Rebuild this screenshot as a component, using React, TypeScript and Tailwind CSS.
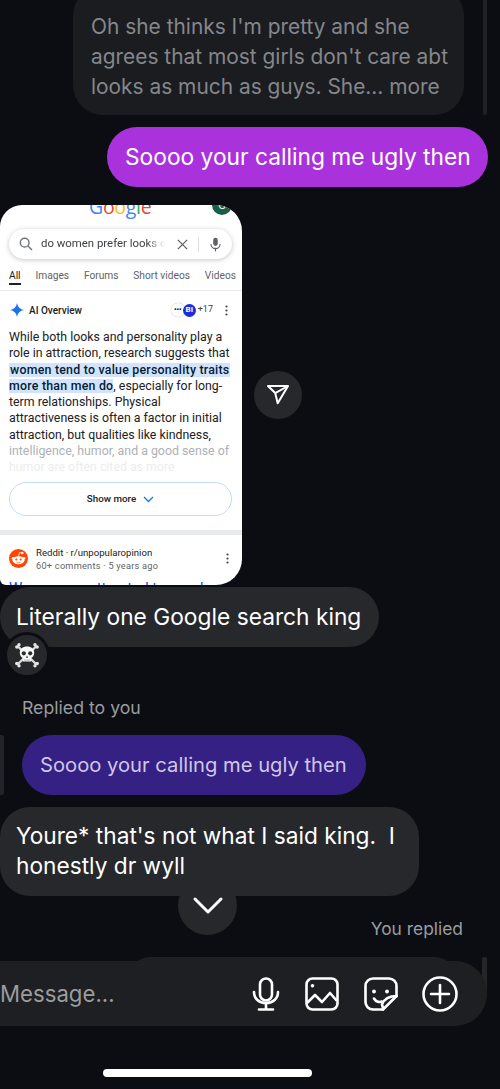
import React from "react";

const inter = "font-['Inter',sans-serif]";

function Skull() {
  return (
    <svg width="26" height="26" viewBox="0 0 26 26">
      <g stroke="#dcdcdc" strokeWidth="2.400" strokeLinecap="round">
        <path d="M4 4.500L22 22M22 4.500L4 22" />
      </g>
      <g fill="#e6e6e6">
        <circle cx="2.800" cy="5" r="1.700" />
        <circle cx="5" cy="2.800" r="1.700" />
        <circle cx="23.200" cy="5" r="1.700" />
        <circle cx="21" cy="2.800" r="1.700" />
        <circle cx="2.800" cy="21.500" r="1.700" />
        <circle cx="5" cy="23.700" r="1.700" />
        <circle cx="23.200" cy="21.500" r="1.700" />
        <circle cx="21" cy="23.700" r="1.700" />
      </g>
      <path d="M13 4.500c-4.400 0-7.200 2.700-7.200 6.200 0 2.600 1.300 4.400 3 5.300v3.500h8.400V16c1.700-.9 3-2.700 3-5.300 0-3.500-2.800-6.200-7.200-6.200z" fill="#f7f7f7" />
      <circle cx="9.800" cy="11.300" r="2.100" fill="#2e2e2e" />
      <circle cx="16.200" cy="11.300" r="2.100" fill="#2e2e2e" />
      <path d="M13 13.600l1.100 2.200h-2.200z" fill="#2e2e2e" />
      <path d="M11 17v2.500M13 17v2.500M15 17v2.500" stroke="#888" strokeWidth=".6" />
    </svg>
  );
}

function Card() {
  return (
    <div className="w-[242px] h-[380px] bg-white overflow-hidden rounded-tl-[22px] rounded-tr-[26px] rounded-br-[26px] rounded-bl-[6px] font-['Roboto',sans-serif] shrink-0 relative">
      <div className="h-[24px] relative overflow-hidden">
        <div className="absolute left-[89px] top-[-10px] text-[19.500px] leading-[24px] font-medium tracking-[-0.3px] font-['Open_Sans',sans-serif]">
          <span className="text-[#4285f4]">G</span>
          <span className="text-[#ea4335]">o</span>
          <span className="text-[#fbbc05]">o</span>
          <span className="text-[#4285f4]">g</span>
          <span className="text-[#34a853]">l</span>
          <span className="text-[#ea4335]">e</span>
        </div>
        <div className="absolute left-[212px] top-[-10px] w-[20px] h-[20px] rounded-full bg-[#1b5e46] flex items-center justify-center text-white text-[11px] leading-none">G</div>
      </div>
      <div className="ml-[9px] mr-[10px] h-[30px] rounded-full bg-white shadow-[0_1px_5px_rgba(60,64,67,0.3)] flex items-center pl-[9px]">
        <svg width="16" height="16" viewBox="0 0 24 24" fill="none" stroke="#70757a" strokeWidth="2.200"><circle cx="10" cy="10" r="6.500" /><path d="M15 15l6 6" /></svg>
        <span className="ml-[7px] text-[11.400px] text-[#3c4043] w-[124px] whitespace-nowrap overflow-hidden [mask-image:linear-gradient(to_right,black_85%,transparent)]">do women prefer looks or</span>
        <svg className="ml-[11px]" width="13" height="13" viewBox="0 0 14 14" stroke="#5f6368" strokeWidth="1.400"><path d="M2 2l10 10M12 2L2 12" /></svg>
        <div className="ml-[9px] w-px h-[15px] bg-[#dadce0]" />
        <svg className="ml-[11px]" width="11" height="15" viewBox="0 0 12 15" fill="#5f6368"><rect x="3.500" y="0" width="5" height="9" rx="2.500" /><path d="M1 7a5 5 0 0 0 10 0" fill="none" stroke="#5f6368" strokeWidth="1.200" /><rect x="5.400" y="11" width="1.200" height="4" /></svg>
      </div>
      <div className="h-[32px] pl-[9px] pr-[6px] flex justify-between text-[10.200px] text-[#5f6368] border-b border-[#e8eaed] pt-[9px] whitespace-nowrap relative">
        <span className="text-[#202124] relative h-[23px]">All<span className="absolute left-0 right-0 bottom-[6px] h-[2px] bg-[#202124]" /></span>
        <span>Images</span>
        <span>Forums</span>
        <span>Short videos</span>
        <span>Videos</span>
      </div>
      <div className="h-[38px] px-[10px] flex items-center">
        <svg width="14" height="14" viewBox="0 0 14 14" fill="#1a73e8"><path d="M7 0c.6 4 3 6.400 7 7-4 .6-6.400 3-7 7-.6-4-3-6.400-7-7 4-.6 6.400-3 7-7z" /></svg>
        <span className="ml-[5px] text-[10px] font-medium text-[#202124]">AI Overview</span>
        <div className="ml-auto flex items-center">
          <div className="w-[14px] h-[14px] rounded-full bg-white flex items-center justify-center text-[7px] font-bold text-black shadow-[0_0_1px_#999] leading-none">•••</div>
          <div className="-ml-[2px] w-[13px] h-[13px] rounded-full bg-[#1a2be0] text-white text-[8px] font-bold flex items-center justify-center">BI</div>
          <span className="ml-[2px] text-[9px] text-[#3c4043]">+17</span>
          <svg className="ml-[12px] mr-[4px]" width="3" height="11" viewBox="0 0 3 11" fill="#444"><circle cx="1.500" cy="1.500" r="1.100" /><circle cx="1.500" cy="5.500" r="1.100" /><circle cx="1.500" cy="9.500" r="1.100" /></svg>
        </div>
      </div>
      <div className="pl-[9px] text-[12.350px] leading-[16.250px] text-[#202124] whitespace-nowrap">
        <div>While both looks and personality play a</div>
        <div>role in attraction, research suggests that</div>
        <div><span className="bg-[#d3e3fd] text-[#001d35] font-medium tracking-[0.24px] pl-[1px] pr-[1px]">women tend to value personality traits</span></div>
        <div><span className="bg-[#d3e3fd] text-[#001d35] font-medium tracking-[0.24px]">more than men do</span>, especially for long-</div>
        <div>term relationships. Physical</div>
        <div>attractiveness is often a factor in initial</div>
        <div>attraction, but qualities like kindness,</div>
        <div className="text-[#aeb1b6]">intelligence, humor, and a good sense of</div>
        <div className="text-[#eceded]">humor are often cited as more</div>
      </div>
      <div className="ml-[9px] mr-[10px] mt-[7px] h-[34px] rounded-full border border-[#c6dafc] flex items-center justify-center text-[9.800px] font-medium text-[#202124]">
        <span>Show more</span>
        <svg className="ml-[7px]" width="11" height="7" viewBox="0 0 11 7" fill="none" stroke="#1a73e8" strokeWidth="1.300"><path d="M1 1l4.500 4.500L10 1" /></svg>
      </div>
      <div className="mt-[14px] h-[5px] bg-[#e8eaed]" />
      <div className="h-[44px] pt-[3px] pl-[9px] pr-[13px] flex items-center">
        <svg width="19" height="19" viewBox="0 0 20 20">
          <circle cx="10" cy="10" r="10" fill="#ff4500" />
          <ellipse cx="10" cy="11.800" rx="6.300" ry="4.300" fill="#fff" />
          <circle cx="4.300" cy="9.800" r="1.500" fill="#fff" />
          <circle cx="15.700" cy="9.800" r="1.500" fill="#fff" />
          <circle cx="14" cy="4.300" r="1.300" fill="#fff" />
          <path d="M10 7.500L11 3.800l3 .5" stroke="#fff" strokeWidth=".8" fill="none" />
          <circle cx="7.700" cy="11" r="1.100" fill="#ff4500" />
          <circle cx="12.300" cy="11" r="1.100" fill="#ff4500" />
          <path d="M7.800 13.800c1.300.9 3.100.9 4.400 0" stroke="#ff4500" strokeWidth=".7" fill="none" />
        </svg>
        <div className="ml-[8px] flex flex-col">
          <span className="text-[9.600px] leading-[13px] text-[#202124]">Reddit · r/unpopularopinion</span>
          <span className="text-[9.200px] leading-[13px] tracking-[0.25px] text-[#5f6368]">60+ comments · 5 years ago</span>
        </div>
        <svg className="ml-auto" width="3" height="11" viewBox="0 0 3 11" fill="#444"><circle cx="1.500" cy="1.500" r="1.100" /><circle cx="1.500" cy="5.500" r="1.100" /><circle cx="1.500" cy="9.500" r="1.100" /></svg>
      </div>
      <div className="pl-[9px] text-[15px] leading-[18px] text-[#1558d6] whitespace-nowrap">Women are attracted to good</div>
    </div>
  );
}

export default function App() {
  return (
    <div className={`w-[500px] h-[1089px] overflow-hidden bg-[#0b0d12] flex flex-col relative ${inter}`}>
      {/* Top faded message */}
      <div className="flex justify-end items-end pr-[13px] -mt-[14px]">
        <div className="w-[391px] h-[129px] pt-[26px] pl-[18px] rounded-[30px] bg-[#1a1c20] text-[20.900px] leading-[30px] text-[#85878b] whitespace-nowrap">
          <div>Oh she thinks I'm pretty and she</div>
          <div>agrees that most girls don't care abt</div>
          <div>looks as much as guys. She... more</div>
        </div>
        <div className="ml-[19px] w-[4px] h-[129px] rounded-full bg-[#1f2125]" />
      </div>

      {/* Purple sent */}
      <div className="flex justify-end pr-[12px] mt-[12px]">
        <div className="h-[60px] w-[381px] rounded-full bg-[#a932dc] text-white text-[22.750px] pl-[18px] flex items-center whitespace-nowrap">
          Soooo your calling me ugly then
        </div>
      </div>

      {/* Screenshot + share */}
      <div className="flex items-center mt-[18px]">
        <Card />
        <div className="ml-[12px] w-[48px] h-[48px] rounded-full bg-[#26282c] flex items-center justify-center">
          <svg width="24" height="24" viewBox="0 0 24 24" fill="none" stroke="#fff" strokeWidth="2" strokeLinejoin="round">
            <line x1="22" y1="3" x2="9.218" y2="10.083" />
            <polygon points="11.698 20.334 22 3.001 2 3.001 9.218 10.084 11.698 20.334" />
          </svg>
        </div>
      </div>

      {/* Literally */}
      <div className="relative mt-[2px] w-[379px] h-[60px] rounded-[30px] bg-[#26282c] text-white text-[22.750px] pl-[16px] flex items-center whitespace-nowrap shrink-0">
        Literally one Google search king
        <div className="absolute left-[4px] top-[45px] w-[46px] h-[46px] rounded-full bg-[#26282c] border-[3px] border-[#0b0d12] flex items-center justify-center">
          <Skull />
        </div>
      </div>

      <div className="mt-[49px] pl-[22px] text-[17.700px] leading-[24px] text-[#9a9ca0]">Replied to you</div>

      <div className="mt-[15px] flex items-stretch">
        <div className="w-[4px] bg-[#222428] rounded-r-[2px]" />
        <div className="ml-[18px] w-[344px] h-[60px] rounded-full bg-[#352084] text-[#cfc6ea] text-[20.200px] pl-[18px] flex items-center whitespace-nowrap">
          Soooo your calling me ugly then
        </div>
      </div>

      <div className="mt-[12px] w-[419px] h-[89px] rounded-[30px] bg-[#26282c] text-white text-[22.700px] leading-[30px] pl-[16px] pt-[14px] whitespace-nowrap">
        <div>Youre* that's not what I said king.&nbsp; I</div>
        <div>honestly dr wyll</div>
      </div>

      <div className="mt-[21px] pr-[37px] text-right text-[17.400px] leading-[24px] text-[#9a9ca0]">You replied</div>

      {/* Scroll-down button over the messages */}
      <div className="absolute left-[178px] top-[876px] w-[59px] h-[59px] rounded-full bg-[#26282c] flex items-center justify-center">
        <svg width="34" height="22" viewBox="0 0 34 22" fill="none" stroke="#fff" strokeWidth="3" strokeLinecap="round" strokeLinejoin="round"><path d="M4 4l13 13L30 4" /></svg>
      </div>

      {/* Composer */}
      <div className="relative mt-[20px] w-[487px] h-[65px]">
        <div className="absolute left-[130px] top-[-4px] w-[325px] h-[30px] rounded-t-[20px] bg-[#1e1f22]" />
        <div className="absolute right-0 top-[-4px] w-[5px] h-[40px] rounded-t-[2px] bg-[#24262a]" />
        <div className="relative h-full rounded-r-[32px] bg-[#1e1f22] flex items-center">
          <span className="text-[22.200px] text-[#9a9ca0]">Message...</span>
          <div className="ml-auto flex items-center pr-[29px]">
            <svg width="28" height="34" viewBox="0 0 28 34" fill="none" stroke="#fff" strokeWidth="2.600" strokeLinecap="round">
              <rect x="8" y="1.500" width="12" height="22" rx="6" />
              <path d="M2 15c0 6.500 5 11 12 11s12-4.500 12-11" />
              <path d="M14 26v6M7 32.500h14" />
            </svg>
            <svg className="ml-[25px]" width="34" height="34" viewBox="0 0 34 34" fill="none" stroke="#fff" strokeWidth="2.600" strokeLinejoin="round">
              <rect x="1.500" y="1.500" width="31" height="31" rx="6" />
              <circle cx="7.500" cy="8.700" r="1.800" fill="#fff" stroke="none" />
              <path d="M2 26L10 18L17 25L25 16L32 24" />
            </svg>
            <svg className="ml-[25px]" width="34" height="34" viewBox="0 0 34 34" fill="none" stroke="#fff" strokeWidth="2.600" strokeLinejoin="round" strokeLinecap="round">
              <path d="M19 32.500H9a7.500 7.500 0 0 1-7.500-7.500V9A7.500 7.500 0 0 1 9 1.500h16A7.500 7.500 0 0 1 32.500 9v10z" />
              <path d="M19 32.500c0-2-.5-3.500-1-5 1.500-4 6-8.500 15-8.500" />
              <circle cx="10" cy="14.500" r="1.900" fill="#fff" stroke="none" />
              <circle cx="23" cy="14.500" r="1.900" fill="#fff" stroke="none" />
              <path d="M10 21.500c2 3.500 5.500 4 8 3" />
            </svg>
            <svg className="ml-[24px]" width="36" height="36" viewBox="0 0 36 36" fill="none" stroke="#fff" strokeWidth="2.600" strokeLinecap="round">
              <circle cx="18" cy="18" r="16.500" />
              <path d="M18 9v18M9 18h18" />
            </svg>
          </div>
        </div>
      </div>

      <div className="mt-[43px] ml-[103px] w-[209px] h-[8px] rounded-full bg-white shrink-0" />
    </div>
  );
}
